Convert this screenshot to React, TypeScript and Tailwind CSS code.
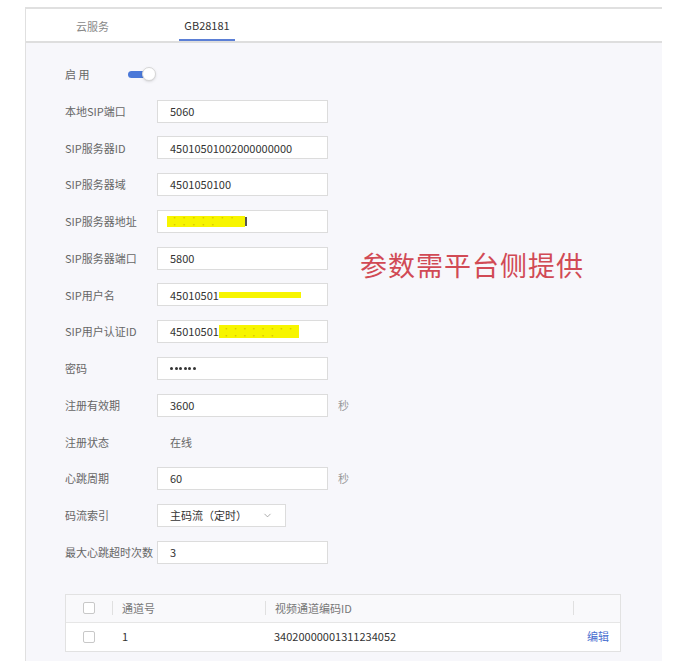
import { ChevronDown } from "lucide-react";

const font = { fontFamily: '"Noto Sans CJK SC", "Noto Sans", sans-serif' };

function Field({ label, children, unit }: { label: string; children: React.ReactNode; unit?: string }) {
  return (
    <div className="flex h-[36.75px] items-center">
      <div className="w-[92px] shrink-0 text-[11px] text-[#666]">{label}</div>
      {children}
      {unit && <span className="ml-[10px] text-[11px] text-[#999]">{unit}</span>}
    </div>
  );
}

function Input({ children }: { children?: React.ReactNode }) {
  return (
    <div className="flex h-[23px] w-[171px] items-center border border-[#dcdcdc] bg-white px-[12px] text-[11px] text-[#333]">
      {children}
    </div>
  );
}

function Checkbox() {
  return <div className="h-[12px] w-[12px] rounded-[2px] border border-[#c8c8c8] bg-white" />;
}

export default function App() {
  return (
    <div className="h-[661px] w-[681px] bg-white pt-[7px]" style={font}>
      <div className="relative ml-[25px] h-[654px] w-[637px] border-l border-t-2 border-[#e0e0e0] bg-[#f7f7fb]">
        {/* tabs */}
        <div className="flex h-[34px] items-stretch border-b-2 border-[#dedede] bg-white text-[11px]">
          <div className="flex w-[133px] items-center justify-center pt-[2px] text-[#888]">云服务</div>
          <div className="ml-[20px] flex w-[56px] flex-col items-center justify-end">
            <span className="text-[#333]">GB28181</span>
            <div className="mt-[6px] h-[2px] w-[56px] bg-[#5b7fd6]" />
          </div>
        </div>

        <div className="pl-[39px] pt-[13px]">
          <Field label="启 用">
            <div className="relative -ml-[29px] flex h-[14px] w-[28px] items-center">
              <div className="h-[7px] w-[20px] rounded-full bg-[#4a78d8]" />
              <div className="absolute right-0 top-0 h-[14px] w-[14px] rounded-full border border-[#d6d6d6] bg-white shadow-sm" />
            </div>
          </Field>
          <Field label="本地SIP端口">
            <Input>5060</Input>
          </Field>
          <Field label="SIP服务器ID">
            <Input>45010501002000000000</Input>
          </Field>
          <Field label="SIP服务器域">
            <Input>4501050100</Input>
          </Field>
          <Field label="SIP服务器地址">
            <Input>
              <span className="-ml-[3px] flex h-[11px] w-[78px] items-center bg-[#f7f500] pl-[4px] text-[7px] leading-none tracking-[0.5px] text-[#d8c400]">
                · · ·  · · · · · · · · ·
              </span>
              <span className="h-[9px] w-[1.5px] bg-[#555]" />
            </Input>
          </Field>
          <Field label="SIP服务器端口">
            <Input>5800</Input>
          </Field>
          <Field label="SIP用户名">
            <Input>
              45010501
              <span className="h-[6px] w-[82px] bg-[#f7f500]" />
            </Input>
          </Field>
          <Field label="SIP用户认证ID">
            <Input>
              45010501
              <span className="flex h-[13px] w-[80px] items-center bg-[#f7f500] pl-[4px] text-[7px] leading-none tracking-[0.3px] text-[#d8c400]">
                · · · · · · · · · · · · · ·
              </span>
            </Input>
          </Field>
          <Field label="密码">
            <Input>
              <div className="flex gap-[1.5px]">
                {[0, 1, 2, 3, 4, 5].map((i) => (
                  <span key={i} className="h-[3px] w-[3px] rounded-full bg-[#333]" />
                ))}
              </div>
            </Input>
          </Field>
          <Field label="注册有效期" unit="秒">
            <Input>3600</Input>
          </Field>
          <Field label="注册状态">
            <span className="pl-[13px] text-[11px] text-[#666]">在线</span>
          </Field>
          <Field label="心跳周期" unit="秒">
            <Input>60</Input>
          </Field>
          <Field label="码流索引">
            <div className="flex h-[23px] w-[129px] items-center justify-between border border-[#dcdcdc] bg-white pl-[12px] pr-[12px] text-[11px] text-[#333]">
              <span>主码流（定时）</span>
              <ChevronDown size={11} strokeWidth={1.5} className="text-[#888]" />
            </div>
          </Field>
          <Field label="最大心跳超时次数">
            <Input>3</Input>
          </Field>

          {/* table */}
          <div className="mt-[23px] w-[556px] border border-[#e2e2e2] bg-white text-[11px]">
            <div className="flex h-[28px] items-center border-b border-[#e6e6e6] bg-[#f9f9fb] text-[#777]">
              <div className="flex w-[46px] justify-center">
                <Checkbox />
              </div>
              <div className="h-[14px] w-px bg-[#e0e0e0]" />
              <div className="w-[152px] pl-[9px]">通道号</div>
              <div className="h-[14px] w-px bg-[#e0e0e0]" />
              <div className="w-[307px] pl-[9px]">视频通道编码ID</div>
              <div className="h-[14px] w-px bg-[#e0e0e0]" />
            </div>
            <div className="flex h-[28px] items-center text-[#333]">
              <div className="flex w-[46px] justify-center">
                <Checkbox />
              </div>
              <div className="w-px" />
              <div className="w-[152px] pl-[9px]">1</div>
              <div className="w-px" />
              <div className="w-[307px] pl-[8px]">34020000001311234052</div>
              <div className="flex-1 pl-[14px] text-[#4a6fd0]">编辑</div>
            </div>
          </div>
        </div>

        {/* annotation overlay */}
        <div className="absolute left-[334px] top-[236px] text-[27px] tracking-[1px] text-[#d14a55]" style={{ fontFamily: '"Noto Sans CJK SC", sans-serif' }}>
          参数需平台侧提供
        </div>
      </div>
    </div>
  );
}
